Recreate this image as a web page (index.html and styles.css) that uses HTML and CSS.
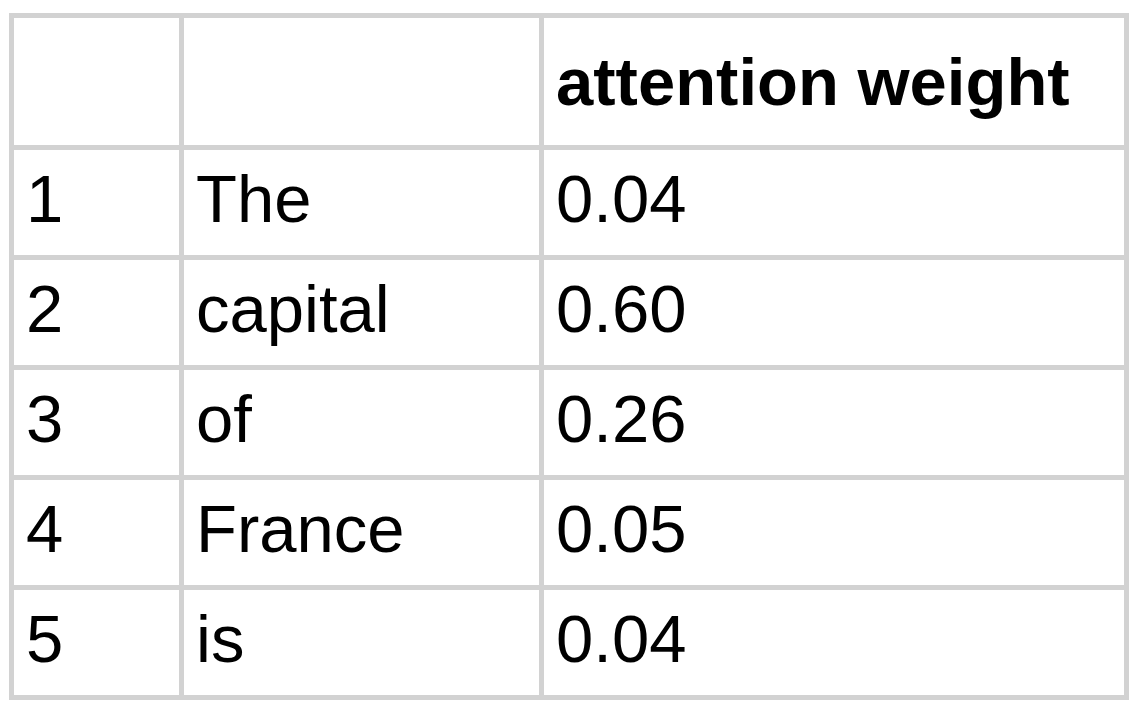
FILE: index.html
```html
<!DOCTYPE html>
<html lang="en">
<head>
<meta charset="utf-8">
<title>Attention weights</title>
<link rel="stylesheet" href="styles.css">
</head>
<body>
<table class="attn">
  <colgroup>
    <col class="c-idx">
    <col class="c-tok">
    <col class="c-w">
  </colgroup>
  <thead>
    <tr>
      <th></th>
      <th></th>
      <th>attention weight</th>
    </tr>
  </thead>
  <tbody>
    <tr><td>1</td><td>The</td><td>0.04</td></tr>
    <tr><td>2</td><td>capital</td><td>0.60</td></tr>
    <tr><td>3</td><td>of</td><td>0.26</td></tr>
    <tr><td>4</td><td>France</td><td>0.05</td></tr>
    <tr><td>5</td><td>is</td><td>0.04</td></tr>
  </tbody>
</table>
</body>
</html>
```

FILE: styles.css
```css
html, body {
  margin: 0;
  padding: 0;
  background: #ffffff;
}

body {
  padding: 13px 0 0 9px;
  font-family: "Liberation Sans", Arial, sans-serif;
  color: #000000;
}

.attn {
  border-collapse: separate;
  border-spacing: 0;
  table-layout: fixed;
  width: 1120px;
  border-top: 5px solid #d2d2d2;
  border-left: 5px solid #d2d2d2;
  font-size: 67px;
}

.c-idx { width: 170px; }
.c-tok { width: 360px; }
.c-w { width: 585px; }

.attn th,
.attn td {
  border-right: 5px solid #d2d2d2;
  border-bottom: 5px solid #d2d2d2;
  text-align: left;
  white-space: nowrap;
  line-height: 75px;
  padding-left: 12px;
  padding-right: 12px;
}

.attn th {
  font-weight: bold;
  padding-top: 26px;
  padding-bottom: 26px;
  height: 75px;
  vertical-align: top;
}

.attn td {
  font-weight: normal;
  padding-top: 11px;
  padding-bottom: 19px;
  height: 75px;
  vertical-align: top;
}
```
